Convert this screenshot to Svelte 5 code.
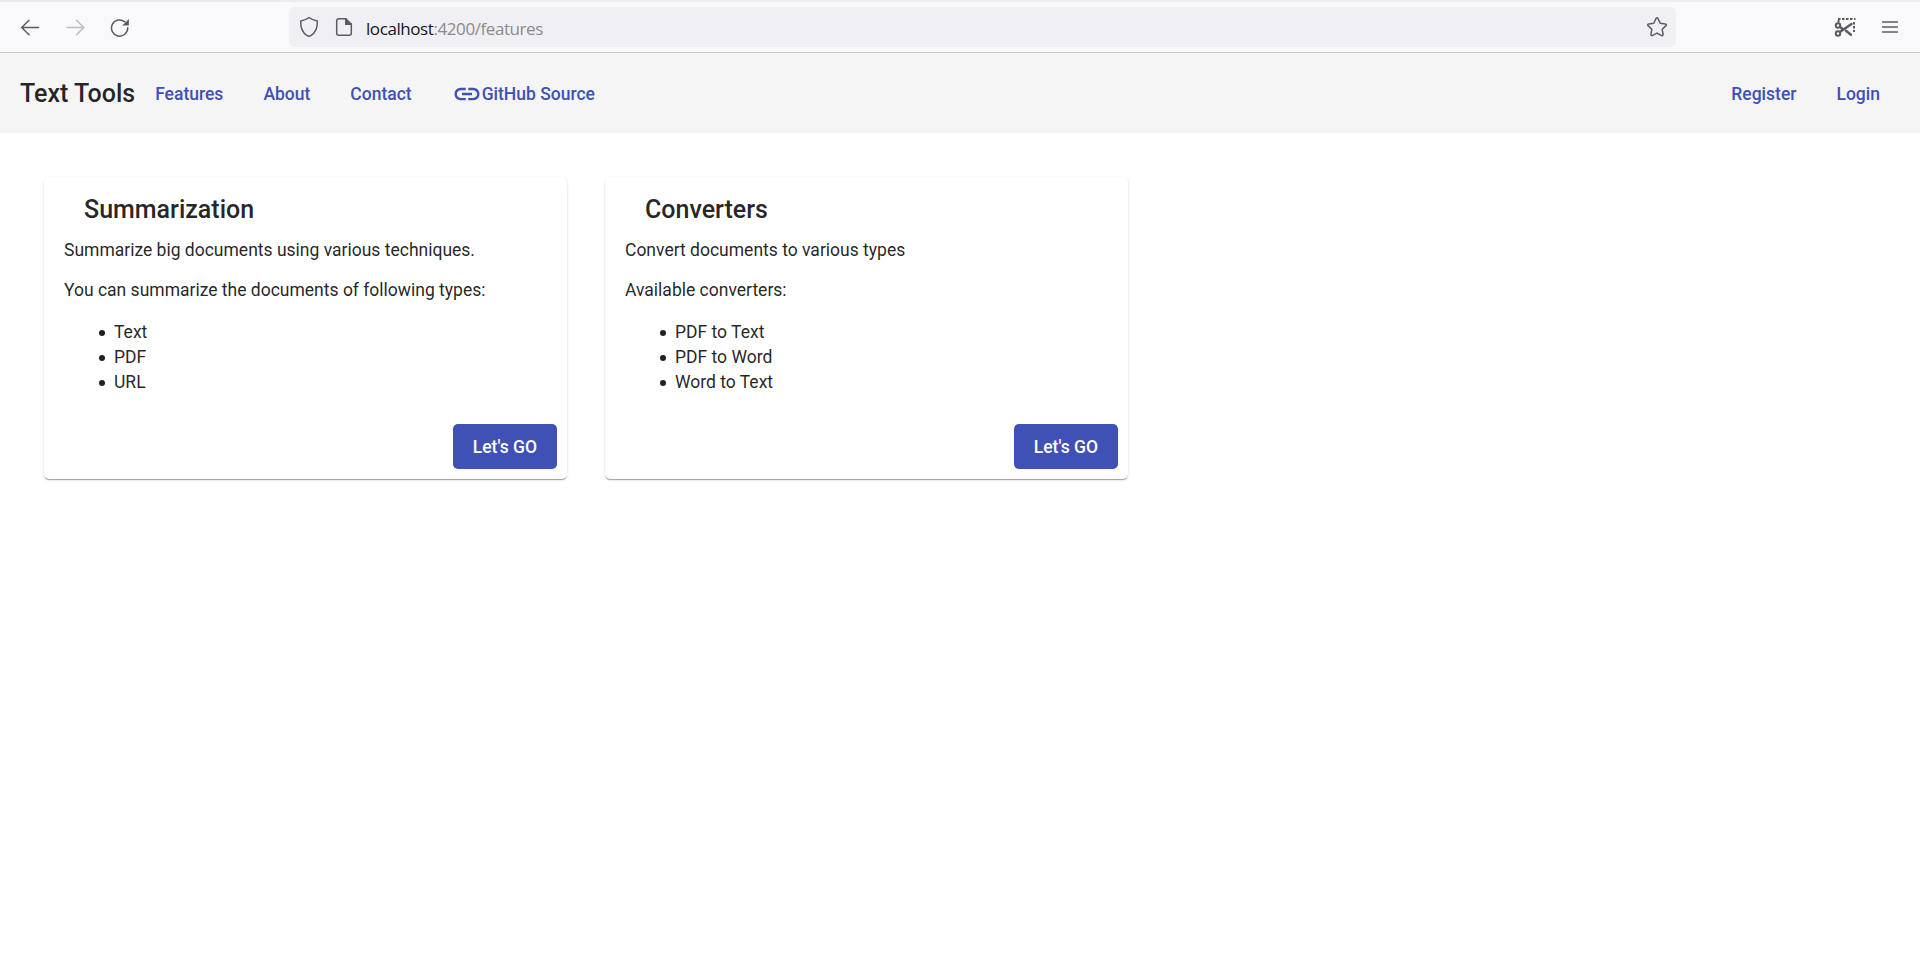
<script>
  const cards = [
    {
      title: 'Summarization',
      intro: 'Summarize big documents using various techniques.',
      lead: 'You can summarize the documents of following types:',
      items: ['Text', 'PDF', 'URL']
    },
    {
      title: 'Converters',
      intro: 'Convert documents to various types',
      lead: 'Available converters:',
      items: ['PDF to Text', 'PDF to Word', 'Word to Text']
    }
  ];
</script>

<div class="strip"><span></span></div>
<div class="chrome">
  <svg class="back" width="20" height="20" viewBox="0 0 20 20"><path d="M18.5 10.500H2M9 3.300 1.700 10.500 9 17.700" /></svg>
  <svg class="forward" width="20" height="20" viewBox="0 0 20 20"><path d="M1 10.500h16.500M10.500 3.300l7.300 7.200-7.300 7.200" /></svg>
  <svg class="reload" width="20" height="20" viewBox="0 0 20 20"><path d="M17.700 10.800A8.100 8.100 0 1 1 14.800 4.800" /><path class="solid" d="M18.900 2v6.600h-6.600z" /></svg>
  <div class="address">
    <svg class="shield" width="20" height="22" viewBox="0 0 20 22"><path d="M10 1.500C12.600 3.500 15.500 4.700 18.300 5c.3 6.300-2 11.900-6.500 14.600-1.200.7-2.400.7-3.600 0C3.700 16.900 1.400 11.300 1.700 5 4.500 4.700 7.400 3.500 10 1.500z" /></svg>
    <svg class="page" width="18" height="20" viewBox="0 0 18 20"><path d="M11 1.800H3.700a2 2 0 0 0-2 2v12.400a2 2 0 0 0 2 2h10.600a2 2 0 0 0 2-2V7" /><path class="solid" d="M10 1h1l6 5.700V8h-7z" /></svg>
    <span class="url">localhost<span>:4200/features</span></span>
    <svg class="star" width="22" height="22" viewBox="0 0 22 22"><path d="M10.100 2.300a1 1 0 0 1 1.800 0l2.300 4.900 5.200.7a1 1 0 0 1 .6 1.700l-3.800 3.700.9 5.300a1 1 0 0 1-1.400 1L11 17.100l-4.700 2.500a1 1 0 0 1-1.400-1l.9-5.300L2 9.600a1 1 0 0 1 .6-1.700l5.200-.7z" /></svg>
  </div>
  <svg class="snip" width="22" height="22" viewBox="0 0 22 22">
    <path class="dash" d="M4 3h17.500M20 6v10" />
    <path class="dash" d="M4.500 4v3" />
    <circle cx="4" cy="9.500" r="2.200" /><circle cx="4" cy="17.500" r="2.200" />
    <path class="blade" d="M5.800 16 17.500 8M6 11l3.500 2.500M12 14.700l5 4" />
  </svg>
  <svg class="menu" width="16" height="14" viewBox="0 0 16 14"><path d="M.5 2h15M.5 7h15M.5 12h15" /></svg>
</div>

<header>
  <span class="brand">Text Tools</span>
  <nav>
    <a href="#features">Features</a>
    <a href="#about">About</a>
    <a href="#contact">Contact</a>
    <a class="github" href="#github">
      <svg width="30" height="30" viewBox="0 0 24 24"><path d="M3.900 12c0-1.710 1.390-3.100 3.100-3.100h4V7H7c-2.760 0-5 2.240-5 5s2.240 5 5 5h4v-1.900H7c-1.710 0-3.100-1.390-3.100-3.100zM8 13h8v-2H8v2zm9-6h-4v1.900h4c1.710 0 3.100 1.390 3.100 3.100s-1.390 3.100-3.100 3.100h-4V17h4c2.760 0 5-2.240 5-5s-2.240-5-5-5z" /></svg>GitHub Source</a>
  </nav>
  <nav class="account">
    <a href="#register">Register</a>
    <a href="#login">Login</a>
  </nav>
</header>

<main>
  {#each cards as card}
    <section>
      <h2>{card.title}</h2>
      <p>{card.intro}</p>
      <p>{card.lead}</p>
      <ul>
        {#each card.items as item}<li>{item}</li>{/each}
      </ul>
      <button>Let's GO</button>
    </section>
  {/each}
</main>

<style>
  :global(body) {
    background: #fff;
    color: rgba(0, 0, 0, 0.87);
    font: 17.5px/25px Roboto, sans-serif;
    overflow: hidden;
  }
  .strip { height: 2px; background: #ededf0; }
  .strip span { display: block; width: 281px; height: 2px; background: #e9e9eb; }
  .chrome {
    box-sizing: border-box;
    height: 51px;
    display: flex;
    align-items: center;
    background: #f9f9fb;
    border-bottom: 1px solid #c8c8cd;
  }
  svg { flex: none; display: block; }
  .chrome svg { fill: none; stroke: #5b5b66; stroke-width: 1.500; stroke-linecap: round; stroke-linejoin: round; }
  .chrome svg .solid { fill: #5b5b66; stroke: none; }
  .back { margin-left: 20px; }
  .chrome .forward { margin-left: 26px; stroke: #bdbdc2; }
  .reload { margin-left: 24px; }
  .address {
    box-sizing: border-box;
    width: 1387px;
    height: 40px;
    margin-left: 159px;
    padding: 0 8px 0 10px;
    border-radius: 5px;
    background: #f0f0f4;
    display: flex;
    align-items: center;
  }
  .page { margin-left: 16px; }
  .url {
    margin: 3px 0 0 13px;
    font-family: "Open Sans", sans-serif;
    font-size: 17px;
    letter-spacing: -0.42px;
    color: #15141a;
    white-space: nowrap;
  }
  .url span { color: #8a8a90; }
  .star { margin-left: auto; }
  .snip { margin-left: 158px; }
  .chrome .snip { stroke-width: 2; }
  .chrome .snip .dash { stroke-dasharray: 2.500 1.500; stroke-linecap: butt; }
  .chrome .snip .blade { stroke-width: 2.400; }
  .menu { margin-left: 26px; }
  header {
    box-sizing: border-box;
    height: 80px;
    padding: 1px 20px 0;
    display: flex;
    align-items: center;
    background: #f5f5f5;
    font-weight: 500;
  }
  .brand { font-size: 25px; }
  nav { display: flex; line-height: 46px; }
  .account { margin-left: auto; }
  a { padding: 0 20px; color: #3f51b5; text-decoration: none; }
  .github { display: flex; align-items: center; }
  .github svg { fill: #3f51b5; }
  main { display: flex; gap: 38px; padding: 44px; }
  section {
    box-sizing: border-box;
    width: 523px;
    height: 302px;
    padding: 20px 10px 10px 20px;
    display: flex;
    flex-direction: column;
    border-radius: 5px;
    box-shadow: 0 2px 1px -1px rgba(0, 0, 0, 0.2), 0 1px 1px rgba(0, 0, 0, 0.14), 0 1px 3px rgba(0, 0, 0, 0.12);
  }
  h2 { margin: 0 0 16px 20px; font-size: 25px; line-height: 25px; font-weight: 500; }
  p { margin: 0 0 15px; }
  ul { margin: 2px 0 0; padding-left: 35px; list-style: none; }
  li { display: flex; align-items: center; gap: 9px; }
  li::before { content: ""; width: 6px; height: 6px; border-radius: 50%; background: currentColor; }
  button {
    margin: auto 0 0 auto;
    padding: 1px 20px 0;
    height: 45px;
    border: 0;
    border-radius: 5px;
    background: #3f51b5;
    color: #fff;
    font: 500 17.5px/44px Roboto, sans-serif;
  }
</style>
